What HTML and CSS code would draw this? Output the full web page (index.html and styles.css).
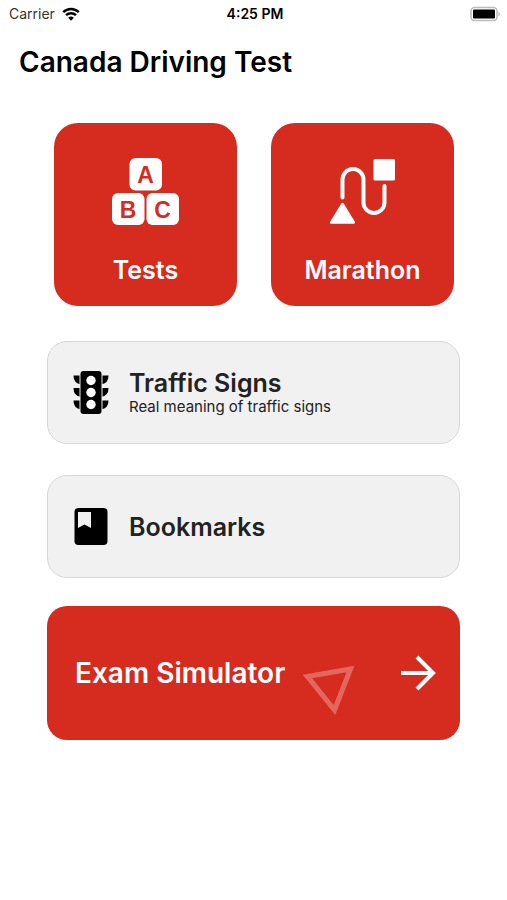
FILE: index.html
```
<!DOCTYPE html>
<html lang="en">
<head>
	<meta charset="utf-8">
	<meta name="viewport" content="width=device-width, initial-scale=1">
	<title>Canada Driving Test</title>
	<link rel="stylesheet" href="styles.css">
</head>
<body>
	<div class="statusbar">
		<div class="carrier">
			<span>Carrier</span>
			<svg class="wifi" viewBox="0 0 18 14" aria-hidden="true">
				<path d="M1.2 5.2a11.2 11.2 0 0 1 15.6 0" />
				<path d="M4 8.2a7.2 7.2 0 0 1 10 0" />
				<path class="dot" d="M9 13.7l-2.8-2.9a4 4 0 0 1 5.6 0z" />
			</svg>
		</div>
		<time class="clock">4:25 PM</time>
		<div class="power">
			<svg class="battery" viewBox="0 0 32 16" aria-hidden="true">
				<rect x="2" y="1.5" width="26" height="13" rx="3.5" fill="#fff" stroke="#bbb" stroke-width="1.5" />
				<rect x="4" y="3.5" width="22" height="9" rx="1" />
				<path d="M29.5 5.5q2.5 2.5 0 5z" fill="#aaa" />
			</svg>
		</div>
	</div>
	<header>
		<h1>Canada Driving Test</h1>
	</header>
	<main>
		<nav class="tiles">
			<a class="tile" href="#tests">
				<svg class="tile-icon" viewBox="0 0 68 68" aria-hidden="true">
					<rect x="17.5" y="1" width="32.5" height="32.5" rx="6" fill="#fff" />
					<rect x="0" y="36" width="32.5" height="32" rx="6" fill="#fff" />
					<rect x="34.5" y="36" width="32.5" height="32" rx="6" fill="#fff" />
					<text x="33.5" y="25.5">A</text>
					<text x="16" y="60.5">B</text>
					<text x="50.5" y="60.5">C</text>
				</svg>
				<span>Tests</span>
			</a>
			<a class="tile" href="#marathon">
				<svg class="tile-icon" viewBox="0 0 68 68" aria-hidden="true">
					<rect x="44.5" y="2" width="21.5" height="21.5" rx="1.5" fill="#fff" />
					<path d="M13.500 47l11.300 18.500h-22.600z" fill="#fff" stroke="#fff" stroke-width="2.5" stroke-linejoin="round" />
					<path d="M13.500 40.500V22.500a10.500 10.500 0 0 1 21 0V45.500a10.500 10.500 0 0 0 21 0V29" fill="none" stroke="#fff" stroke-width="4" stroke-linecap="round" />
				</svg>
				<span>Marathon</span>
			</a>
		</nav>
		<a class="card" href="#signs">
			<svg class="card-icon" viewBox="0 0 36 44" aria-hidden="true">
				<path d="M.5 4.500h35q0 8-7.500 9h-20q-7.500-1-7.500-9z" />
				<path d="M.5 17h35q0 8-7.500 9h-20q-7.500-1-7.500-9z" />
				<path d="M.5 29.500h35q0 8-7.500 9h-20q-7.500-1-7.500-9z" />
				<rect x="6.5" y="0" width="23" height="43" rx="4" fill="#f1f1f1" />
				<rect x="7.5" y="0" width="21" height="43" rx="3" />
				<circle cx="18" cy="9.5" r="4.700" fill="#fff" />
				<circle cx="18" cy="21.500" r="4.700" fill="#fff" />
				<circle cx="18" cy="33.500" r="4.700" fill="#fff" />
			</svg>
			<div>
				<h2>Traffic Signs</h2>
				<p>Real meaning of traffic signs</p>
			</div>
		</a>
		<a class="card" href="#bookmarks">
			<svg class="card-icon" viewBox="0 0 36 44" aria-hidden="true">
				<rect x="1.5" y="3" width="33" height="37" rx="4" />
				<path d="M5 7h13v16l-6.500-3.500-6.500 3.500z" fill="#f1f1f1" />
			</svg>
			<h2>Bookmarks</h2>
		</a>
		<a class="exam" href="#exam">
			<span>Exam Simulator</span>
			<svg class="triangle" viewBox="0 0 52 52" aria-hidden="true">
				<path d="M4.500 12.500L47.500 5L31.500 46z" />
			</svg>
			<svg class="arrow" viewBox="0 0 36 36" aria-hidden="true">
				<path d="M1 18h31M17 2l16 16-16 16" />
			</svg>
		</a>
	</main>
</body>
</html>
```
FILE: styles.css
```
* {
	box-sizing: border-box;
}
body {
	margin: 0;
	background-color: #fff;
	color: #000;
	font-family: "Inter", "Lato", sans-serif;
}
h1, h2, p {
	margin: 0;
}
a {
	color: inherit;
	text-decoration: none;
}
.statusbar {
	display: grid;
	grid-template-columns: 1fr auto 1fr;
	align-items: center;
	height: 27px;
	padding: 0 6px 0 9px;
	font-size: 14px;
}
.carrier {
	display: flex;
	align-items: center;
	gap: 7px;
	color: #333;
}
.wifi {
	width: 18px;
	height: 14px;
	fill: none;
	stroke: #000;
	stroke-width: 2.5;
}
.wifi .dot {
	fill: #000;
	stroke: none;
}
.clock {
	font-weight: 600;
}
.power {
	display: flex;
	justify-content: flex-end;
}
.battery {
	width: 32px;
	height: 16px;
}
header {
	padding: 17px 19px 0;
}
h1 {
	font-size: 28px;
	font-weight: 600;
	line-height: 36px;
}
main {
	padding: 43px 47px 0;
}
.tiles {
	display: grid;
	grid-template-columns: 1fr 1fr;
	gap: 34px;
	margin: 0 6px 35px 7px;
}
.tile {
	display: flex;
	flex-direction: column;
	align-items: center;
	justify-content: space-between;
	aspect-ratio: 1;
	padding: 34px 12px 20px;
	border-radius: 24px;
	background-color: #d62b1f;
	color: #fff;
	font-size: 25px;
	font-weight: 600;
	line-height: 32px;
}
.tile-icon {
	width: 68px;
	height: 68px;
}
.tile-icon text {
	fill: #d62b1f;
	font-family: "Liberation Sans", Arial, sans-serif;
	font-size: 23px;
	font-weight: 700;
	text-anchor: middle;
}
.card {
	display: flex;
	align-items: center;
	gap: 20px;
	min-height: 103px;
	margin-bottom: 31px;
	padding: 0 25px;
	border: 1px solid #d8d8d8;
	border-radius: 20px;
	background-color: #f1f1f1;
	color: #222;
}
.card-icon {
	width: 36px;
	height: 44px;
	fill: #000;
}
h2 {
	font-size: 25px;
	font-weight: 600;
	line-height: 28px;
}
p {
	font-size: 15px;
	line-height: 20px;
}
.exam {
	display: flex;
	align-items: center;
	min-height: 134px;
	margin-top: -3px;
	padding: 0 24px 0 28px;
	border-radius: 20px;
	background-color: #d62b1f;
	color: #fff;
	font-size: 28px;
	font-weight: 600;
}
.triangle {
	width: 52px;
	height: 52px;
	margin: 34px auto 0 18px;
	fill: none;
	stroke: #e4675e;
	stroke-width: 5;
}
.arrow {
	width: 36px;
	height: 36px;
	fill: none;
	stroke: #fff;
	stroke-width: 4;
}
```
